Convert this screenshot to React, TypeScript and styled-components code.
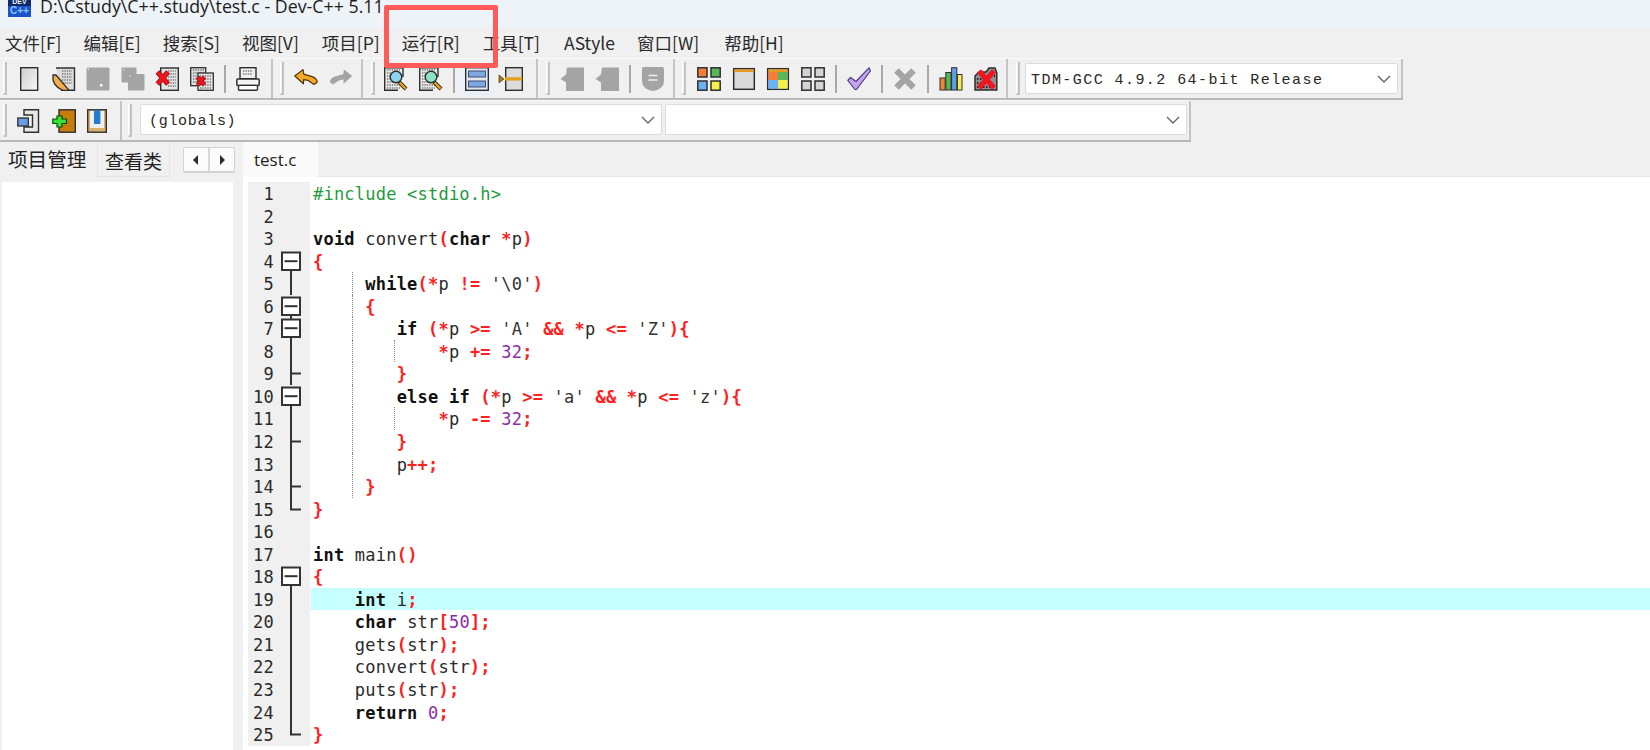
import React from "react";
import styled, { createGlobalStyle } from "styled-components";

const Global = createGlobalStyle`
  html, body { margin: 0; padding: 0; background: #f0f0f0; overflow: hidden; }
  #root { width: 1650px; height: 750px; }
`;

const Page = styled.div`
  position: relative;
  width: 1650px;
  height: 750px;
  overflow: hidden;
  background: #f0f0f0;
  display: flex;
  flex-direction: column;
  font-family: "Noto Sans", "Noto Sans CJK SC", sans-serif;
  color: #222;
`;

const TitleBar = styled.div`
  height: 28px;
  flex: none;
  box-sizing: border-box;
  background: #eef3f8;
  overflow: hidden;
  display: flex;
  align-items: flex-end;
  gap: 9px;
  padding: 0 0 11px 8px;
`;
const TitleText = styled.span`
  font-family: "Open Sans", "Noto Sans", sans-serif;
  font-size: 17.8px;
  line-height: 22px;
  white-space: nowrap;
  color: #1c1c1c;
`;

const MenuBar = styled.div`
  height: 30px;
  flex: none;
  display: flex;
  align-items: center;
  gap: 22px;
  padding-left: 5px;
  font-size: 17.5px;
  font-family: "Noto Sans CJK SC", "Noto Sans", sans-serif;
  color: #2a2a2a;
`;
const MenuItem = styled.span<{ $push: number }>`
  white-space: nowrap;
  line-height: 30px;
  margin-left: ${(p) => p.$push}px;
`;

const ToolRow = styled.div<{ $w: number }>`
  width: ${(p) => p.$w}px;
  height: 42px;
  flex: none;
  display: flex;
  box-sizing: border-box;
  border-bottom: 2px solid #b9b9b9;
  border-top: 1px solid #fafafa;
`;
const Seg = styled.div<{ $w: number }>`
  width: ${(p) => p.$w}px;
  flex: none;
  box-sizing: border-box;
  display: flex;
  align-items: center;
  gap: 10.6px;
  border-right: 2px solid #c4c4c4;
`;
const Handle = styled.span<{ $before: number; $after: number }>`
  flex: none;
  box-sizing: border-box;
  width: 4px;
  height: 33px;
  margin-left: ${(p) => p.$before}px;
  margin-right: ${(p) => p.$after - 10.6}px;
  border-left: 1px solid #ffffff;
  border-right: 2px solid #c2c2c2;
  border-bottom: 2px solid #c2c2c2;
`;
const Sep = styled.span`
  flex: none;
  width: 2px;
  height: 28px;
  margin: 0 -0.5px;
  background: #a8a8a8;
`;
const Slot = styled.span<{ $hot?: boolean }>`
  flex: none;
  width: 24px;
  height: 24px;
  display: block;
  ${(p) => p.$hot && `background: #e8f1fa; box-shadow: 0 0 0 4px #e8f1fa; border-radius: 2px;`}
  svg { display: block; overflow: visible; }
`;

const Select = styled.div<{ $w: number; $size: number; $track: number }>`
  width: ${(p) => p.$w}px;
  height: 31px;
  flex: none;
  box-sizing: border-box;
  background: #fff;
  border: 1px solid #dcdcdc;
  border-radius: 2px;
  display: flex;
  align-items: center;
  justify-content: space-between;
  padding: 3px 6px 0 ${(p) => (p.$w > 500 ? 8 : 5)}px;
  font-family: "Liberation Mono", monospace;
  font-size: ${(p) => p.$size}px;
  letter-spacing: ${(p) => p.$track}px;
  color: #2a2626;
  svg { flex: none; margin-top: -3px; }
`;
const SelectPair = styled.div`
  display: flex;
  gap: 3px;
  margin-bottom: 2px;
`;

const Workspace = styled.div`
  flex: 1;
  min-height: 0;
  display: flex;
`;
const LeftPanel = styled.div`
  width: 243px;
  flex: none;
  display: flex;
  flex-direction: column;
`;
const LeftTabs = styled.div`
  height: 40px;
  flex: none;
  display: flex;
  align-items: flex-start;
  font-family: "Noto Sans CJK SC", sans-serif;
  font-size: 19px;
`;
const LeftTab = styled.div<{ $active?: boolean }>`
  height: 35px;
  box-sizing: border-box;
  width: ${(p) => (p.$active ? 97 : 73)}px;
  padding-left: ${(p) => (p.$active ? 8 : 7)}px;
  font-size: ${(p) => (p.$active ? 19.6 : 19)}px;
  line-height: ${(p) => (p.$active ? 33 : 37)}px;
  white-space: nowrap;
  ${(p) => !p.$active && `border-left: 1px solid #e4e4e4; border-right: 1px solid #e4e4e4; border-bottom: 1px solid #e4e4e4;`}
`;
const Scroller = styled.div`
  margin: 5px 0 0 13px;
  width: 52px;
  height: 26px;
  box-sizing: border-box;
  background: #fbfbfb;
  border: 1px solid #d2d2d2;
  border-bottom-width: 2px;
  border-radius: 2px;
  display: flex;
`;
const ScrollCell = styled.span`
  flex: 1;
  display: flex;
  align-items: center;
  justify-content: center;
  & + & { border-left: 2px solid #d8d8d8; }
`;
const ProjectPane = styled.div`
  flex: 1;
  background: #fff;
  margin: 0 10px 0 2px;
`;

const EditorPanel = styled.div`
  flex: 1;
  min-width: 0;
  display: flex;
  flex-direction: column;
`;
const EditorTabs = styled.div`
  height: 35px;
  flex: none;
  display: flex;
  border-bottom: 1px solid #e6e6e6;
  box-sizing: border-box;
`;
const EditorTab = styled.div`
  width: 75px;
  height: 35px;
  box-sizing: border-box;
  background: #fafafa;
  padding-left: 11px;
  font-size: 17px;
  line-height: 35px;
  font-family: "Open Sans", sans-serif;
  color: #222;
`;
const EditorBody = styled.div`
  flex: 1;
  min-height: 0;
  background: #fff;
  padding: 5px 0 0 5px;
  font-family: "DejaVu Sans Mono", monospace;
  font-size: 17px;
  letter-spacing: 0.22px;
`;
const Row = styled.div`
  display: flex;
  height: 22.55px;
  line-height: 24px;
`;
const LineNo = styled.div`
  width: 26px;
  flex: none;
  text-align: right;
  background: #f0f0f0;
  color: #2a2a2a;
`;
const Fold = styled.div`
  width: 36px;
  flex: none;
  background: #f0f0f0;
  svg { display: block; overflow: visible; }
`;
const Code = styled.div<{ $current?: boolean }>`
  position: relative;
  flex: 1;
  margin-left: 1px;
  padding-left: 2px;
  white-space: pre;
  background: ${(p) => (p.$current ? "#c6ffff" : "transparent")};
`;
const Guide = styled.i<{ $left: number }>`
  position: absolute;
  left: ${(p) => p.$left}px;
  top: 0;
  bottom: 0;
  border-left: 1px dotted #8a8a8a;
`;
const TOKEN_STYLES: Record<string, string> = {
  pre: "color:#1f9a3c;",
  kw: "color:#111;font-weight:700;",
  sym: "color:#ff2020;font-weight:700;",
  num: "color:#8b2ca6;",
  str: "color:#333;",
  id: "color:#2a2a2a;",
};
const Token = styled.span<{ $kind: string }>`
  ${(p) => TOKEN_STYLES[p.$kind]}
`;

const Annotation = styled.div`
  position: absolute;
  left: 384px;
  top: 5px;
  width: 114px;
  height: 63px;
  box-sizing: border-box;
  border: 5px solid #ff5a5a;
  border-radius: 2px;
`;

/* ---------- icons ---------- */
const INK = "#2e2e2e";
const GRAY = "#a4a4a4";
const Svg: React.FC<{ children: React.ReactNode }> = ({ children }) => (
  <svg width="24" height="24" viewBox="0 0 24 24">{children}</svg>
);
const Dots: React.FC<{ x: number; y: number; w: number; n: number }> = ({ x, y, w, n }) => (
  <g stroke="#7a7a7a" strokeWidth="1.4" strokeDasharray="1.4 1">
    {Array.from({ length: n }, (_, i) => (
      <path key={i} d={`M${x} ${y + i * 3}h${w}`} />
    ))}
  </g>
);
const RedX: React.FC<{ x1: number; y1: number; x2: number; y2: number; w?: number }> = ({ x1, y1, x2, y2, w = 3.4 }) => (
  <g fill="none">
    <path d={`M${x1} ${y1}L${x2} ${y2}M${x2} ${y1}L${x1} ${y2}`} stroke="#7a1010" strokeWidth={w + 1.2} />
    <path d={`M${x1} ${y1}L${x2} ${y2}M${x2} ${y1}L${x1} ${y2}`} stroke="#f0141e" strokeWidth={w} />
  </g>
);
const NewIcon = () => (
  <Svg>
    <defs>
      <linearGradient id="ng" x1="0" y1="0" x2="1" y2="1"><stop offset="0" stopColor="#cfcfcf" /><stop offset="1" stopColor="#f6f6f6" /></linearGradient>
    </defs>
    <rect x="3.7" y="0.7" width="17" height="22.6" fill="url(#ng)" stroke={INK} strokeWidth="1.4" />
  </Svg>
);
const OpenIcon = () => (
  <Svg>
    <path d="M4 1H22.5V23.3H9" fill="#dcdcdc" stroke={INK} strokeWidth="1.4" />
    <Dots x={10} y={4} w={10} n={5} />
    <path d="M1 8V13Q3 20 11 23.3H17L4 8Z" fill="#f5ae4e" stroke={INK} strokeWidth="1.3" />
  </Svg>
);
const SaveGray = () => (
  <Svg>
    <rect x="0.5" y="0.5" width="23" height="23" rx="1" fill={GRAY} />
    <rect x="1.5" y="1.5" width="1.5" height="1.5" fill="#ddd" />
    <rect x="14" y="17" width="2.4" height="2.4" fill="#fff" />
  </Svg>
);
const SaveAllGray = () => (
  <Svg>
    <rect x="0.5" y="0.5" width="15" height="15" rx="1" fill={GRAY} />
    <rect x="7" y="7" width="16.5" height="16.5" rx="1" fill={GRAY} />
    <rect x="2" y="2" width="1.4" height="1.4" fill="#ddd" />
    <rect x="8" y="8" width="1.4" height="1.4" fill="#ddd" />
  </Svg>
);
const CloseIcon = () => (
  <Svg>
    <rect x="5.7" y="1" width="17.6" height="22.3" fill="#e4e4e4" stroke={INK} strokeWidth="1.4" />
    <Dots x={13} y={4} w={8} n={6} />
    <RedX x1={2.5} y1={5} x2={13} y2={17} w={3.8} />
  </Svg>
);
const CloseAllIcon = () => (
  <Svg>
    <rect x="0.7" y="0.7" width="15" height="18" fill="#dedede" stroke={INK} strokeWidth="1.3" />
    <Dots x={3} y={3} w={11} n={5} />
    <rect x="8" y="6" width="15.3" height="17.3" fill="#e4e4e4" stroke={INK} strokeWidth="1.3" />
    <Dots x={10} y={9} w={12} n={5} />
    <RedX x1={7.5} y1={10} x2={14.5} y2={18} w={3} />
  </Svg>
);
const PrintIcon = () => (
  <Svg>
    <rect x="4" y="0.7" width="16" height="11" fill="#eee" stroke={INK} strokeWidth="1.4" />
    <Dots x={7} y={4} w={9} n={2} />
    <rect x="0.8" y="12" width="22.4" height="6.4" rx="1" fill="#f4f4f4" stroke={INK} strokeWidth="1.5" />
    <rect x="2.5" y="18.4" width="19" height="4.8" rx="1" fill="#fff" stroke={INK} strokeWidth="1.4" />
  </Svg>
);
const ARROW = "M0.8 9L9 2.6L9.8 7.2L18 9.6Q23 11.4 23.2 15.2L20 17.4L14.2 13.4L9.6 12.6L9.4 16.8Z";
const UndoIcon = () => (
  <Svg><path d={ARROW} fill="#f6a82a" stroke="#4f3505" strokeWidth="1.2" strokeLinejoin="round" /></Svg>
);
const RedoIcon = () => (
  <Svg><path d={ARROW} fill={GRAY} transform="matrix(-1 0 0 1 24 0)" /></Svg>
);
const Lens: React.FC<{ fill: string }> = ({ fill }) => (
  <Svg>
    <path d="M14 23.3H0.7V0.7H19V10" fill="#e8e8e8" stroke={INK} strokeWidth="1.4" />
    <Dots x={3} y={3} w={13} n={7} />
    <path d="M15 15L22 22" stroke="#3a2a08" strokeWidth="4" />
    <path d="M15.5 15.5L21.6 21.6" stroke="#e8a526" strokeWidth="2.2" />
    <circle cx="12" cy="10" r="5.8" fill={fill} stroke={INK} strokeWidth="1.4" />
  </Svg>
);
const ViewIcon = () => (
  <Svg>
    <rect x="0.7" y="0.7" width="22.6" height="22.6" fill="#e4e8ee" stroke={INK} strokeWidth="1.4" />
    <rect x="3.5" y="4" width="17" height="6" fill="#7ea8e4" stroke="#3b4f70" />
    <rect x="3.5" y="14" width="17" height="6" fill="#7ea8e4" stroke="#3b4f70" />
  </Svg>
);
const SplitIcon = () => (
  <Svg>
    <path d="M0 8L5 12L0 16Z" fill="#a87a12" stroke="#3a2a08" strokeWidth=".6" />
    <rect x="6.7" y="0.7" width="16.6" height="22.6" fill="#dcdcdc" stroke={INK} strokeWidth="1.4" />
    <rect x="6" y="10.2" width="17" height="3.4" fill="#e7a21c" />
  </Svg>
);
const TagGray = () => (
  <Svg><path d="M7 0.5H24V24H6V15.5L0.5 12L6 7.5Z" fill={GRAY} /></Svg>
);
const ShieldGray = () => (
  <Svg>
    <path d="M1 1.5Q1 0 3 0H21Q23 0 23 1.5V14Q23 22 12 24Q1 22 1 14Z" fill={GRAY} />
    <path d="M7.5 8.5H16.5M7.5 13H16.5" stroke="#eee" strokeWidth="1.3" />
  </Svg>
);
const Grid: React.FC<{ fills: string[] }> = ({ fills }) => (
  <Svg>
    {[[0.8, 0.8], [14, 0.8], [0.8, 14], [14, 14]].map(([x, y], i) => (
      <rect key={i} x={x} y={y} width="9.2" height="9.2" fill={fills[i]} stroke={INK} strokeWidth="1.5" />
    ))}
  </Svg>
);
const WindowIcon = () => (
  <Svg>
    <rect x="1.7" y="1.7" width="20.6" height="20.6" fill="#dadada" stroke={INK} strokeWidth="1.5" />
    <rect x="2.4" y="2.4" width="19.2" height="2.6" fill="#e69a1e" />
  </Svg>
);
const ColorWindowIcon = () => (
  <Svg>
    <rect x="1.7" y="1.7" width="20.6" height="20.6" fill="#dadada" stroke={INK} strokeWidth="1.5" />
    <rect x="2.4" y="2.4" width="19.2" height="2.6" fill="#e69a1e" />
    <rect x="2.4" y="5" width="9.6" height="8" fill="#f47e3a" />
    <rect x="12" y="5" width="9.6" height="8" fill="#58b858" />
    <rect x="2.4" y="13" width="9.6" height="8.6" fill="#6ab2f4" />
    <rect x="12" y="13" width="9.6" height="8.6" fill="#f7ee4c" />
  </Svg>
);
const CheckIcon = () => (
  <Svg>
    <path d="M0.8 13.5L3.5 10.5L9 14.5L22 0.8L23.4 4L9.5 22.5H8Z" fill="#c3a4f4" stroke="#4b3c78" strokeWidth="1.2" strokeLinejoin="round" />
  </Svg>
);
const XGray = () => (
  <Svg><path d="M3.5 3.5L20.5 20.5M20.5 3.5L3.5 20.5" stroke={GRAY} strokeWidth="6.4" /></Svg>
);
const BarsIcon = () => (
  <Svg>
    <rect x="1" y="11" width="5.2" height="12" fill="#f08438" stroke={INK} />
    <rect x="6.8" y="5.5" width="5.2" height="17.5" fill="#58b858" stroke={INK} />
    <rect x="12.6" y="0.7" width="5.2" height="22.3" fill="#5a9fe8" stroke={INK} />
    <rect x="18.4" y="7.5" width="4.6" height="15.5" fill="#f7ee4c" stroke={INK} />
  </Svg>
);
const RedXIcon = () => (
  <Svg>
    <path d="M1 9L5 5H12L15 1H21L22.8 6V23H1Z" fill="#8f8f8f" stroke={INK} strokeWidth="1.5" />
    <g stroke="#222" strokeWidth="1.8" strokeDasharray="1.5 1.5">
      <path d="M3 12h5M3 16h4M3 20h18M17 9h4" />
    </g>
    <path d="M5 4L20 21M20 4L5 21" stroke="#f0141e" strokeWidth="5.2" />
  </Svg>
);
const ProjAdd = () => (
  <Svg>
    <path d="M7 0.8H21.5V23.2H7V18H15.5V6H7Z" fill="#e8e8e8" stroke={INK} strokeWidth="1.4" />
    <rect x="0.8" y="9" width="10.5" height="8" fill="#6a9fe6" stroke={INK} strokeWidth="1.3" />
  </Svg>
);
const ProjPlus = () => (
  <Svg>
    <rect x="7" y="0.8" width="16.3" height="22.4" fill="#c87c0a" stroke={INK} strokeWidth="1.4" />
    <path d="M5 7H10V10H14.5V14.5H10V18H5V14.5H0.8V10H5Z" fill="#37e332" stroke="#0b4a0b" strokeWidth="1.2" />
  </Svg>
);
const ProjBook = () => (
  <Svg>
    <rect x="1.7" y="0.8" width="18.6" height="22.4" fill="#dcb16c" stroke={INK} strokeWidth="1.4" />
    <rect x="4" y="2" width="14" height="17" fill="#f0f0f0" />
    <rect x="8" y="1.4" width="6.4" height="13.6" fill="#1f7ecf" />
  </Svg>
);
const Chevron = () => (
  <svg width="14" height="8" viewBox="0 0 14 8"><path d="M1 1L7 7L13 1" fill="none" stroke="#666" strokeWidth="1.4" /></svg>
);
const Triangle: React.FC<{ flip?: boolean }> = ({ flip }) => (
  <svg width="6" height="10" viewBox="0 0 6 10"><path d={flip ? "M1 0L6 5L1 10Z" : "M5 0L0 5L5 10Z"} fill="#2a2a2a" /></svg>
);
const DevLogo = () => (
  <svg width="23" height="22" viewBox="0 0 23 22" style={{ flex: "none" }}>
    <rect width="23" height="22" fill="#0f2a6a" />
    <rect y="11" width="23" height="11" fill="#1a53c8" />
    <text x="11.5" y="9" textAnchor="middle" fontFamily="Liberation Sans" fontSize="7" fontWeight="700" fill="#f2f2f2">DEV</text>
    <text x="11.5" y="19" textAnchor="middle" fontFamily="Liberation Sans" fontSize="10" fontWeight="700" fill="#8fc0ff">C++</text>
  </svg>
);

type FoldKind = "" | "box" | "boxTop" | "line" | "tick" | "end";
const FoldMark: React.FC<{ kind: FoldKind }> = ({ kind }) => {
  if (!kind) return null;
  const s = { stroke: "#333", strokeWidth: 2, fill: "none" };
  return (
    <svg width="36" height="22.5" viewBox="0 0 36 22.5">
      {kind === "line" && <path d="M17 -1V24" {...s} />}
      {kind === "tick" && <path d="M17 -1V24M17 11.5H27" {...s} />}
      {kind === "end" && <path d="M17 -1V11.5H27" {...s} />}
      {kind === "boxTop" && <path d="M17 -1V2.5" {...s} />}
      {(kind === "box" || kind === "boxTop") && (
        <>
          <path d="M17 20V24" {...s} />
          <rect x="8" y="2.5" width="18" height="17.5" fill="#fff" stroke="#333" strokeWidth="2" />
          <path d="M10.5 11.2H23.5" {...s} />
        </>
      )}
    </svg>
  );
};

/* ---------- data ---------- */
const MENU: [string, number][] = [
  ["文件[F]", 0], ["编辑[E]", 0], ["搜索[S]", 0], ["视图[V]", 0], ["项目[P]", 1],
  ["运行[R]", 0], ["工具[T]", 1], ["AStyle", 2], ["窗口[W]", 0], ["帮助[H]", 3],
];
const SOURCE: { text: string; fold?: FoldKind; guides?: number[] }[] = [
  { text: "#include <stdio.h>" },
  { text: "" },
  { text: "void convert(char *p)" },
  { text: "{", fold: "box" },
  { text: "     while(*p != '\\0')", fold: "line", guides: [41] },
  { text: "     {", fold: "box", guides: [41] },
  { text: "        if (*p >= 'A' && *p <= 'Z'){", fold: "boxTop", guides: [41] },
  { text: "            *p += 32;", fold: "line", guides: [41, 83] },
  { text: "        }", fold: "tick", guides: [41] },
  { text: "        else if (*p >= 'a' && *p <= 'z'){", fold: "box", guides: [41] },
  { text: "            *p -= 32;", fold: "line", guides: [41, 83] },
  { text: "        }", fold: "tick", guides: [41] },
  { text: "        p++;", fold: "line", guides: [41] },
  { text: "     }", fold: "tick", guides: [41] },
  { text: "}", fold: "end" },
  { text: "" },
  { text: "int main()" },
  { text: "{", fold: "box" },
  { text: "    int i;", fold: "line" },
  { text: "    char str[50];", fold: "line" },
  { text: "    gets(str);", fold: "line" },
  { text: "    convert(str);", fold: "line" },
  { text: "    puts(str);", fold: "line" },
  { text: "    return 0;", fold: "line" },
  { text: "}", fold: "end" },
];
const KEYWORDS = new Set(["void", "char", "while", "if", "else", "int", "return"]);
const tokenize = (line: string): { kind: string; text: string }[] => {
  if (line.startsWith("#")) return [{ kind: "pre", text: line }];
  const re = /('(?:\\.|[^'])*')|(\b\d+\b)|([A-Za-z_]\w*)|([(){}\[\]*;!=<>&+\-]+)|(\s+)/g;
  const out: { kind: string; text: string }[] = [];
  let m: RegExpExecArray | null;
  while ((m = re.exec(line))) {
    if (m[1]) out.push({ kind: "str", text: m[1] });
    else if (m[2]) out.push({ kind: "num", text: m[2] });
    else if (m[3]) out.push({ kind: KEYWORDS.has(m[3]) ? "kw" : "id", text: m[3] });
    else if (m[4]) out.push({ kind: "sym", text: m[4] });
    else out.push({ kind: "id", text: m[5] });
  }
  return out;
};

export default function App() {
  return (
    <Page>
      <Global />
      <TitleBar>
        <DevLogo />
        <TitleText>D:\Cstudy\C++.study\test.c - Dev-C++ 5.11</TitleText>
      </TitleBar>
      <MenuBar>
        {MENU.map(([m, push]) => (
          <MenuItem key={m} $push={push}>{m}</MenuItem>
        ))}
      </MenuBar>

      <ToolRow $w={1403}>
        <Seg $w={273}>
          <Handle $before={3} $after={10} />
          <Slot><NewIcon /></Slot>
          <Slot><OpenIcon /></Slot>
          <Slot><SaveGray /></Slot>
          <Slot><SaveAllGray /></Slot>
          <Slot><CloseIcon /></Slot>
          <Slot><CloseAllIcon /></Slot>
          <Sep />
          <Slot><PrintIcon /></Slot>
        </Seg>
        <Seg $w={90}>
          <Handle $before={7} $after={10} />
          <Slot><UndoIcon /></Slot>
          <Slot><RedoIcon /></Slot>
        </Seg>
        <Seg $w={175}>
          <Handle $before={8} $after={9} />
          <Slot><Lens fill="#8ed3ef" /></Slot>
          <Slot><Lens fill="#8fe3c2" /></Slot>
          <Sep />
          <Slot $hot><ViewIcon /></Slot>
          <Slot><SplitIcon /></Slot>
        </Seg>
        <Seg $w={137}>
          <Handle $before={8} $after={10} />
          <Slot><TagGray /></Slot>
          <Slot><TagGray /></Slot>
          <Sep />
          <Slot><ShieldGray /></Slot>
        </Seg>
        <Seg $w={333}>
          <Handle $before={7} $after={11} />
          <Slot><Grid fills={["#f47e3a", "#58b858", "#6ab2f4", "#f7ee4c"]} /></Slot>
          <Slot><WindowIcon /></Slot>
          <Slot><ColorWindowIcon /></Slot>
          <Slot><Grid fills={["#d4d4d4", "#d4d4d4", "#d4d4d4", "#d4d4d4"]} /></Slot>
          <Sep />
          <Slot><CheckIcon /></Slot>
          <Sep />
          <Slot><XGray /></Slot>
          <Sep />
          <Slot><BarsIcon /></Slot>
          <Slot><RedXIcon /></Slot>
        </Seg>
        <Seg $w={395}>
          <Handle $before={8} $after={5} />
          <Select $w={373} $size={15} $track={1.44}>
            <span>TDM-GCC 4.9.2 64-bit Release</span>
            <Chevron />
          </Select>
        </Seg>
      </ToolRow>

      <ToolRow $w={1191}>
        <Seg $w={122}>
          <Handle $before={3} $after={10} />
          <Slot><ProjAdd /></Slot>
          <Slot><ProjPlus /></Slot>
          <Slot><ProjBook /></Slot>
        </Seg>
        <Seg $w={1069}>
          <Handle $before={6} $after={8} />
          <SelectPair>
            <Select $w={522} $size={15} $track={0.7}>
              <span>(globals)</span>
              <Chevron />
            </Select>
            <Select $w={522} $size={15} $track={0.7}>
              <span />
              <Chevron />
            </Select>
          </SelectPair>
        </Seg>
      </ToolRow>

      <Workspace>
        <LeftPanel>
          <LeftTabs>
            <LeftTab $active>项目管理</LeftTab>
            <LeftTab>查看类</LeftTab>
            <Scroller>
              <ScrollCell><Triangle /></ScrollCell>
              <ScrollCell><Triangle flip /></ScrollCell>
            </Scroller>
          </LeftTabs>
          <ProjectPane />
        </LeftPanel>
        <EditorPanel>
          <EditorTabs>
            <EditorTab>test.c</EditorTab>
          </EditorTabs>
          <EditorBody>
            {SOURCE.map((l, i) => (
              <Row key={i}>
                <LineNo>{i + 1}</LineNo>
                <Fold><FoldMark kind={l.fold ?? ""} /></Fold>
                <Code $current={i === 18}>
                  {l.guides?.map((g) => <Guide key={g} $left={g} />)}
                  {tokenize(l.text).map((t, j) => (
                    <Token key={j} $kind={t.kind}>{t.text}</Token>
                  ))}
                </Code>
              </Row>
            ))}
          </EditorBody>
        </EditorPanel>
      </Workspace>
      <Annotation />
    </Page>
  );
}
